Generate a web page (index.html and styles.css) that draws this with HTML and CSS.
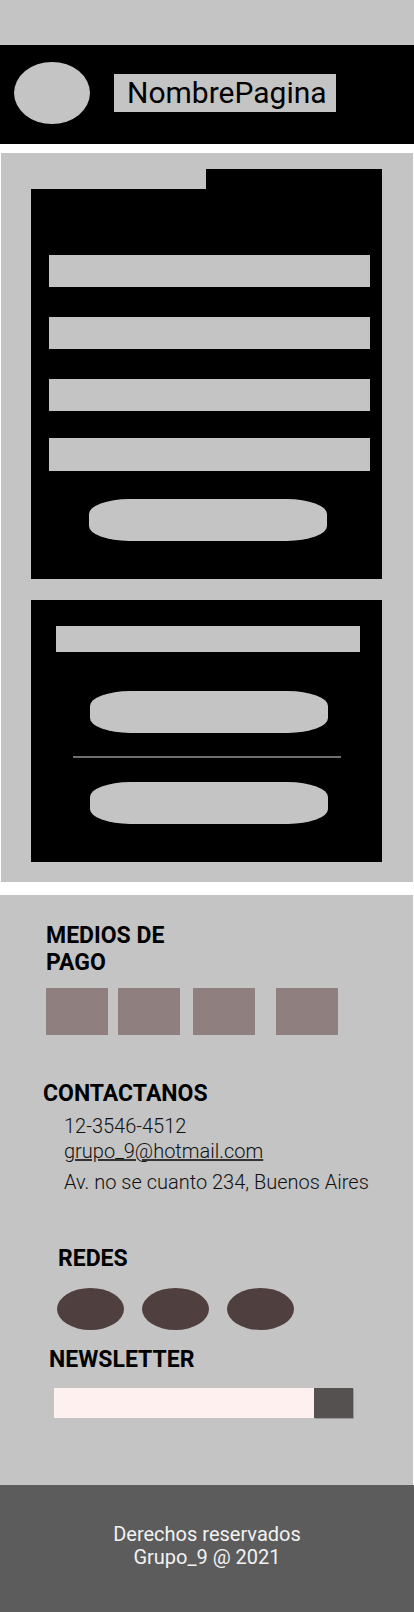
FILE: index.html
```html
<!DOCTYPE html>
<html lang="es">
<head>
<meta charset="utf-8">
<title>NombrePagina</title>
<link rel="stylesheet" href="styles.css">
</head>
<body>
<div class="topbar"></div>
<header class="header">
  <div class="logo"></div>
  <div class="brand">NombrePagina</div>
</header>

<main class="main">
  <section class="card card-login">
    <div class="card-tab"></div>
    <div class="card-body">
      <div class="field"></div>
      <div class="field"></div>
      <div class="field"></div>
      <div class="field"></div>
      <div class="btn btn-first"></div>
    </div>
  </section>
  <section class="card card-alt">
    <div class="bar"></div>
    <div class="btn btn-alt"></div>
    <hr class="divider">
    <div class="btn btn-alt2"></div>
  </section>
</main>

<section class="info">
  <h2 class="heading heading-pago">MEDIOS DE PAGO</h2>
  <div class="pay-list">
    <div class="pay"></div>
    <div class="pay"></div>
    <div class="pay"></div>
    <div class="pay"></div>
  </div>

  <h2 class="heading heading-contact">CONTACTANOS</h2>
  <div class="contact">
    <div class="contact-line">12-3546-4512</div>
    <a class="contact-line contact-mail" href="#">grupo_9@hotmail.com</a>
    <div class="contact-line contact-addr">Av. no se cuanto 234, Buenos Aires</div>
  </div>

  <h2 class="heading heading-redes">REDES</h2>
  <div class="social">
    <div class="social-item"></div>
    <div class="social-item"></div>
    <div class="social-item"></div>
  </div>

  <h2 class="heading heading-news">NEWSLETTER</h2>
  <form class="news-form">
    <div class="news-input"></div>
    <div class="news-btn"></div>
  </form>
</section>

<footer class="footer">
  <p class="footer-text">Derechos reservados<br>Grupo_9 @ 2021</p>
</footer>
</body>
</html>
```

FILE: styles.css
```css
* { box-sizing: border-box; }

body {
  margin: 0;
  background: #ffffff;
  font-family: Roboto, "Liberation Sans", sans-serif;
  color: #000;
}

.topbar {
  height: 45px;
  background: #c4c4c4;
}

.header {
  height: 99px;
  background: #000;
  display: flex;
  align-items: flex-start;
  padding-top: 17px;
  padding-left: 14px;
}

.logo {
  width: 76px;
  height: 62px;
  border-radius: 50%;
  background: #c4c4c4;
}

.brand {
  margin-left: 24px;
  margin-top: 12px;
  width: 222px;
  height: 38px;
  background: #c4c4c4;
  color: #000;
  font-size: 30px;
  line-height: 37px;
  padding-left: 13px;
  white-space: nowrap;
}

.main {
  margin: 9px 1px 0 1px;
  background: #c4c4c4;
  padding: 16px 0 20px 30px;
}

.card {
  width: 351px;
}

.card-tab {
  width: 176px;
  height: 20px;
  margin-left: auto;
  background: #000;
}

.card-body {
  background: #000;
  height: 390px;
  padding: 66px 0 0 18px;
}

.field {
  width: 321px;
  height: 32px;
  background: #c4c4c4;
  margin-bottom: 30px;
}

.field:nth-child(3) {
  margin-bottom: 27px;
}

.field:nth-child(4) {
  height: 33px;
  margin-bottom: 28px;
}

.btn {
  width: 238px;
  height: 42px;
  background: #c4c4c4;
  border-radius: 40px / 15px;
}

.btn-first {
  margin-left: 40px;
}

.card-alt {
  margin-top: 21px;
  background: #000;
  height: 262px;
  padding-top: 26px;
}

.bar {
  width: 304px;
  height: 26px;
  margin-left: 25px;
  background: #c4c4c4;
}

.btn-alt {
  margin: 39px 0 0 59px;
}

.divider {
  border: 0;
  height: 2px;
  background: #6f6f6f;
  width: 268px;
  margin: 23px 0 0 42px;
}

.btn-alt2 {
  margin: 24px 0 0 59px;
}

.info {
  margin: 13px 1px 0 0;
  background: #c4c4c4;
  padding: 27px 0 67px 0;
}

.heading {
  margin: 0;
  font-size: 23px;
  line-height: 27px;
  font-weight: 700;
  color: #000;
}

.heading-pago {
  padding-left: 46px;
  width: 200px;
}

.pay-list {
  display: flex;
  margin: 12px 0 0 46px;
}

.pay {
  width: 62px;
  height: 47px;
  background: #8f7f7f;
  margin-right: 10px;
}

.pay:nth-child(2) { margin-right: 13px; }
.pay:nth-child(3) { margin-right: 21px; }

.heading-contact {
  padding-left: 43px;
  margin-top: 45px;
}

.contact {
  padding-left: 64px;
  margin-top: 7px;
  font-weight: 300;
  font-size: 20px;
  line-height: 25px;
  color: #111;
}

.contact-line {
  display: block;
  white-space: nowrap;
}

.contact-mail {
  color: #111;
  text-decoration: underline;
  text-decoration-color: #333;
}

.contact-addr {
  margin-top: 6px;
}

.heading-redes {
  padding-left: 58px;
  margin-top: 50px;
}

.social {
  display: flex;
  gap: 18px;
  margin: 16px 0 0 57px;
}

.social-item {
  width: 67px;
  height: 42px;
  border-radius: 50%;
  background: #4f3f3f;
}

.heading-news {
  padding-left: 49px;
  margin-top: 16px;
}

.news-form {
  display: flex;
  margin: 15px 0 0 54px;
}

.news-input {
  width: 260px;
  height: 30px;
  background: #fff0f0;
}

.news-btn {
  width: 39px;
  height: 30px;
  background: #555151;
  box-shadow: 1px 1px 0 #9a9a9a;
}

.footer {
  background: #5c5c5c;
  height: 127px;
  padding-top: 38px;
  text-align: center;
}

.footer-text {
  margin: 0;
  color: #f2f2f2;
  font-size: 20px;
  line-height: 23px;
}
```
